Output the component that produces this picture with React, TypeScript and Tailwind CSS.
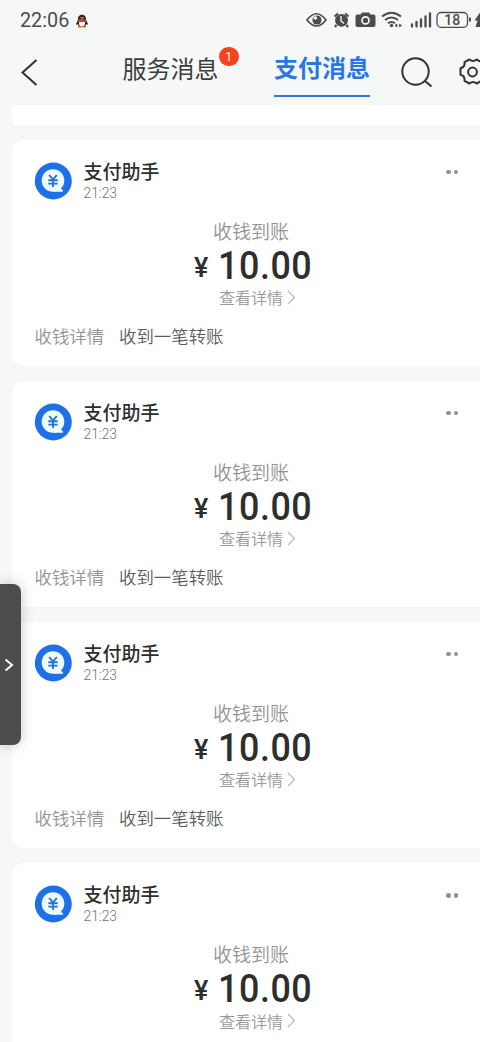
import React from "react";

function StatusBar() {
  return (
    <div className="flex h-10 shrink-0 items-center pl-5 text-[#4b4d4c]">
      <span className="w-[50px] whitespace-nowrap pt-[2px] font-['Roboto',sans-serif] text-[19.800px] leading-none">22:06</span>
      <svg className="ml-[6px]" width="12" height="15" viewBox="0 0 12 15">
        <path d="M2 7C1 0 11 0 10 7l2 4-1 1-1-1-1 3H3l-1-3-1 1-1-1z" fill="#302522" />
        <ellipse cx="6" cy="10" rx="3" ry="3.500" fill="#fff" />
        <path d="M2 6q4 2 8 0l.5 2.300q-4.500 2-9 0z" fill="#c9442f" />
        <path d="M3.500 4.500q2.500-1 5 0-2.500 2.500-5 0z" fill="#d97748" />
        <path d="M2 13h3.500v1.500H2zM6.500 13H10v1.500H6.500z" fill="#d9632f" />
      </svg>
      <svg className="ml-[218px] shrink-0" width="174" height="20" viewBox="306 10 174 20">
        <path d="M307 20q9.500-12.500 19 0-9.500 12-19 0z" fill="none" stroke="currentColor" strokeWidth="1.700" />
        <circle cx="317" cy="20" r="4.600" fill="currentColor" /><circle cx="315.300" cy="18" r="1.800" fill="#f6f8f8" />
        <circle cx="341.500" cy="20.300" r="6.400" fill="currentColor" />
        <path d="M334.500 16.500l3.500-3M348.500 16.500l-3.500-3M336.500 25l-1.500 2M346.500 25l1.500 2" stroke="currentColor" strokeWidth="2.200" />
        <path d="M341 16v5l3 2.500" stroke="#f6f8f8" strokeWidth="1.400" fill="none" />
        <path d="M357.500 14.500h3l1.500-2h7l1.500 2h3q2 0 2 2V25q0 2-2 2h-16q-2 0-2-2v-8.500q0-2 2-2z" fill="currentColor" />
        <circle cx="365.500" cy="20.400" r="3.500" fill="currentColor" stroke="#f6f8f8" strokeWidth="1.700" />
        <path d="M382 16.500q9.500-7.500 19 0M385 20q6.500-5 13 0M388 23.300q3.500-2.700 7 0" fill="none" stroke="currentColor" strokeWidth="2" />
        <circle cx="391.500" cy="25.500" r="1.700" fill="currentColor" />
        <path d="M395 25.500l2-1.500v3zM401.500 25.500l-2-1.500v3z" fill="currentColor" stroke="currentColor" strokeWidth=".7" />
        <path d="M412 24.500v2M416.500 22v4.500M421 19.500v7M425.500 16.500v10M430 13.500v13" stroke="currentColor" strokeWidth="2.300" strokeLinecap="round" />
        <rect x="437" y="12.500" width="30.500" height="14.800" rx="4" fill="none" stroke="currentColor" strokeWidth="1.300" />
        <path d="M470 17.500v4" stroke="currentColor" strokeWidth="2" />
        <text x="452.300" y="25" textAnchor="middle" fontFamily="Roboto, sans-serif" fontWeight="500" fontSize="14" fill="currentColor">18</text>
        <path d="M480 12.500l-5.500 8h3l-2 6.500h4.500z" fill="currentColor" />
      </svg>
    </div>
  );
}

function Header() {
  return (
    <header className="flex h-[65px] shrink-0 items-start">
      <svg className="ml-5 mt-[18px] shrink-0" width="18" height="29" viewBox="0 0 18 29" fill="none" stroke="#303331" strokeWidth="2">
        <path d="M16.500 2L2.500 14.500l14 12.500" />
      </svg>
      <div className="relative ml-[84.500px] mt-[12.500px] w-24 shrink-0 whitespace-nowrap text-[24px] leading-[30px] text-[#3b3e3d]">
        服务消息
        <span className="absolute -top-[6px] left-[96.500px] flex size-[19.500px] items-center justify-center rounded-full bg-[#f5421f] font-['Roboto',sans-serif] text-[13px] leading-none text-white">1</span>
      </div>
      <div className="ml-[55.500px] mt-3 h-[45px] w-24 shrink-0 whitespace-nowrap border-b-2 border-[#2f78df] text-[24px] font-bold leading-[30px] text-[#2878e3]">支付消息</div>
      <svg className="ml-[31px] mt-[17px] shrink-0" width="32" height="31" viewBox="0 0 32 31" fill="none" stroke="#303331" strokeWidth="2">
        <circle cx="14.500" cy="14.500" r="13.200" /><path d="M24 24l6.500 5.500" />
      </svg>
      <svg className="ml-[26px] mt-[17px] shrink-0" width="28" height="30" viewBox="0 0 28 30" fill="none" stroke="#303331" strokeWidth="2" strokeLinejoin="round">
        <path d="M10.500 2.500q3.500 3 7 0l5 2.700q-.7 4.800 4 6v6.600q-4.700 1.200-4 6l-5 2.700q-3.500-3-7 0l-5-2.700q.7-4.800-4-6v-6.600q4.700-1.200 4-6z" />
        <circle cx="13.500" cy="15" r="4.400" />
      </svg>
    </header>
  );
}

function Avatar() {
  return (
    <svg className="shrink-0" width="38" height="38" viewBox="0 0 38 38">
      <circle cx="19.300" cy="19" r="18.500" fill="#1d70e8" />
      <circle cx="19" cy="18.500" r="11.300" fill="#ebfbff" />
      <path d="M19 29.800h9.500q1.500-.8 0-1.900l-2-3.500z" fill="#ebfbff" />
      <circle cx="28.300" cy="26.500" r="1" fill="#1d70e8" />
      <path d="M15.200 13l3.800 4.500 3.800-4.500M19 17.500v7.500M14.300 18.200h9.400M14.300 21.600h9.400" fill="none" stroke="#2872d6" strokeWidth="1.900" />
    </svg>
  );
}

function PaymentCard({ footer = true }: { footer?: boolean }) {
  return (
    <article className="mb-[15.200px] h-[226px] shrink-0 rounded-l-[12px] bg-white pt-[21px]">
      <div className="flex h-[50px]">
        <div className="ml-[22px] mt-[1px]"><Avatar /></div>
        <div className="ml-[11.500px] -mt-[1px]">
          <div className="h-[22px] text-[19px] font-medium leading-[22px] text-[#2c2f2e]">支付助手</div>
          <div className="mt-[2px] font-['Roboto',sans-serif] text-[13.800px] font-light leading-[18px] text-[#6f7271]">21:23</div>
        </div>
        <div className="ml-auto mr-[22px] mt-[9px] flex gap-[3px]">
          <i className="size-[4.500px] rounded-full bg-[#8f9190]" />
          <i className="size-[4.500px] rounded-full bg-[#8f9190]" />
        </div>
      </div>
      <div className="flex flex-col items-start">
        <div className="mt-[5px] h-[31px] pl-[201px] text-[19px] font-[350] leading-[30px] text-[#929493]">收钱到账</div>
        <div className="flex h-[38px] items-center pl-[182px] font-['Roboto',sans-serif] font-medium leading-[38px] text-[#2c2f2e]">
          <span className="w-[23.500px] pt-[4px] text-[27px] leading-[30px]">¥</span>
          <span className="origin-left scale-x-[0.92] text-[39px] tracking-[0.600px]">10.00</span>
        </div>
        <div className="flex h-[25px] items-center pl-[207px] text-[16px] font-[350] leading-[22px] text-[#999b9a]">
          查看详情
          <svg className="ml-[4px]" width="9" height="15" viewBox="0 0 9 15" fill="none" stroke="#b7bab9" strokeWidth="1.200"><path d="M1 1l6.500 6.500L1 14" /></svg>
        </div>
      </div>
      {footer && (
        <div className="mt-[11px] flex gap-[15px] pl-[22.500px] text-[17.400px] font-[350] leading-[30px]">
          <span className="text-[#929493]">收钱详情</span>
          <span className="text-[#5b5e5d]">收到一笔转账</span>
        </div>
      )}
    </article>
  );
}

export default function App() {
  return (
    <div className="relative flex h-[1042px] w-[480px] flex-col overflow-hidden bg-[#f6f8f8] font-['Noto_Sans_CJK_SC',sans-serif]">
      <StatusBar />
      <Header />
      <main className="flex min-h-0 flex-1 flex-col overflow-hidden pl-3">
        <div className="mb-[14.500px] h-5 shrink-0 rounded-bl-[4px] bg-white" />
        <PaymentCard />
        <PaymentCard />
        <PaymentCard />
        <PaymentCard footer={false} />
      </main>
      <button className="absolute left-0 top-[584px] flex h-[161px] w-[21px] items-center rounded-r-[8px] bg-[#4b4c4b] pl-[4px] shadow-[0_0_14px_rgba(0,0,0,0.22)]">
        <svg width="10" height="14" viewBox="0 0 10 14" fill="none" stroke="#fff" strokeWidth="2"><path d="M1.500 1.500L8 7l-6.500 5.500" /></svg>
      </button>
    </div>
  );
}
